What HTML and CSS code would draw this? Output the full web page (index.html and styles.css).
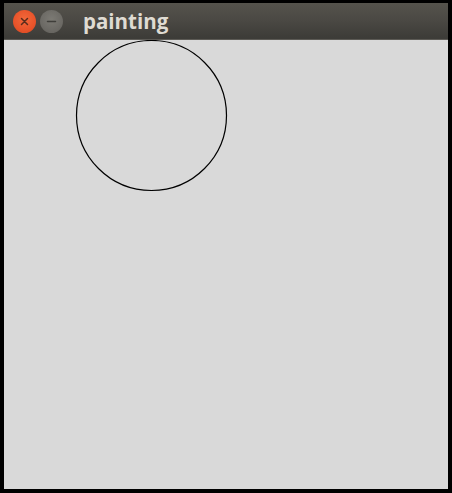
FILE: index.html
```html
<!DOCTYPE html>
<html>
<head>
<meta charset="utf-8">
<link rel="stylesheet" href="styles.css">
</head>
<body>
<div class="window">
  <div class="titlebar">
    <div class="btn close">
      <svg width="23" height="23" viewBox="0 0 23 23"><path d="M8.5 8.5 L14.5 14.5 M14.5 8.5 L8.5 14.5" stroke="#5a2c1c" stroke-width="1.5" stroke-linecap="round"/></svg>
    </div>
    <div class="btn minimize">
      <svg width="23" height="23" viewBox="0 0 23 23"><path d="M7.5 11.5 L15.5 11.5" stroke="#3f3e3a" stroke-width="1.5" stroke-linecap="round"/></svg>
    </div>
    <div class="title">painting</div>
  </div>
  <div class="content">
    <svg class="canvas" width="444" height="449" viewBox="0 0 444 449">
      <circle cx="147.5" cy="75.5" r="75" fill="none" stroke="#000" stroke-width="1.2"/>
    </svg>
  </div>
</div>
</body>
</html>
```
FILE: styles.css
```css
html, body {
  margin: 0;
  padding: 0;
  background: #000;
}
.window {
  width: 452px;
  height: 493px;
  box-sizing: border-box;
  padding: 3px 4px 4px 4px;
  display: flex;
  flex-direction: column;
}
.titlebar {
  height: 37px;
  box-sizing: border-box;
  display: flex;
  align-items: center;
  padding-left: 9px;
  background: linear-gradient(to bottom, #55534c 0%, #4a4843 50%, #3d3c38 95%);
  border-bottom: 1px solid #5c5a55;
  flex: none;
}
.btn {
  width: 23px;
  height: 23px;
  border-radius: 50%;
  display: flex;
  flex: none;
}
.close {
  background: radial-gradient(circle at 50% 40%, #f2683a 0%, #e8532a 60%, #d2461f 100%);
}
.minimize {
  margin-left: 4px;
  background: radial-gradient(circle at 50% 40%, #7c7a74 0%, #6c6a65 60%, #5e5c57 100%);
}
.title {
  margin-left: 20px;
  font-family: "Open Sans", "DejaVu Sans", sans-serif;
  font-weight: bold;
  font-size: 20.5px;
  color: #dfdbd2;
  line-height: 1;
  margin-top: 1px;
}
.content {
  flex: 1;
  background: #d9d9d9;
  position: relative;
  overflow: hidden;
}
.canvas {
  display: block;
}
```
